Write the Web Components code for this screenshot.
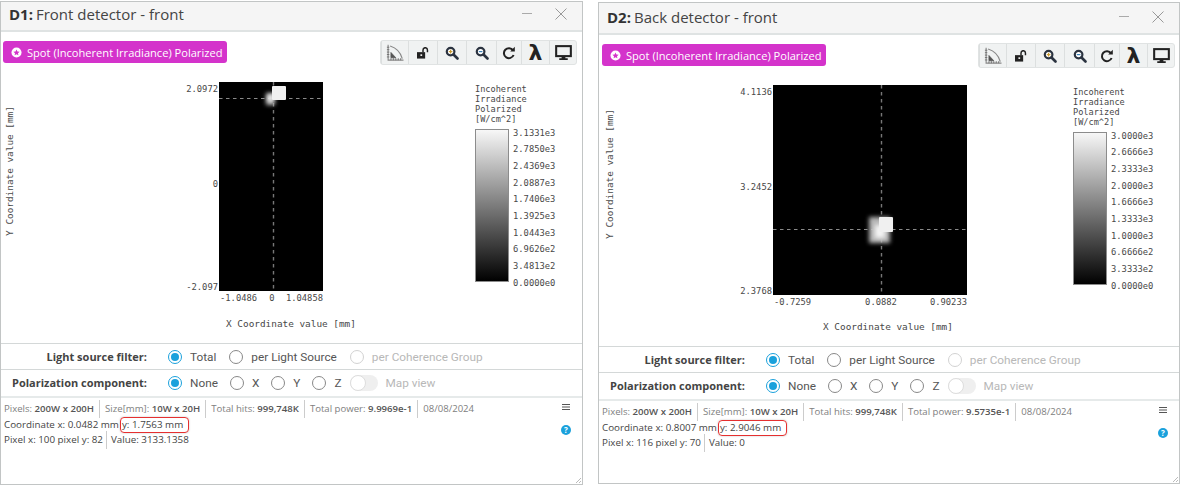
<!DOCTYPE html>
<html>
<head>
<meta charset="utf-8">
<title>Detectors</title>
<style>
  html, body { margin: 0; height: 100%; background: #fff; overflow: hidden; }
  body { position: relative; font-family: "Open Sans", "Noto Sans", sans-serif; }
</style>
</head>
<body>

<detector-window style="left:0;top:1px;width:583px;height:484px;--head:30px;--head-pad:4px;--tag-pad:2px;--tool-pad:5px" label="D1:" name="Front detector - front">
  <spot-plot ix="218" iy="82" iw="104" ih="209"
    ymax="2.0972" ymid="0" ymin="-2.097" xmin="-1.0486" xmid="0" xmax="1.04858"
    cx="54" cy="16" spot="53,4,14,14" glow="47,11,9,12;49,13,5,6" ylabel-x="12" xlabel-x="290" xmid-shift="-1"
    ticks="3.1331e3,2.7850e3,2.4369e3,2.0887e3,1.7406e3,1.3925e3,1.0443e3,6.9626e2,3.4813e2,0.0000e0"></spot-plot>
  <filter-rows slot="rows"></filter-rows>
  <status-panel slot="status" pixel="200W x 200H" size="10W x 20H" hits="999,748K" power="9.9969e-1" date="08/08/2024"
    cx="0.0482 mm" cy="1.7563 mm" px="Pixel x: 100 pixel y: 82" value="3133.1358"></status-panel>
</detector-window>

<detector-window style="left:598px;top:2px;width:582px;height:482px;--head:32px;--head-pad:3px;--tag-pad:3px;--tool-pad:4px" label="D2:" name="Back detector - front">
  <spot-plot ix="174" iy="82" iw="194" ih="210"
    ymax="4.1136" ymid="3.2452" ymin="2.3768" xmin="-0.7259" xmid="0.0882" xmax="0.90233"
    cx="108" cy="144" spot="106,132,14,15" glow="96,132,21,26;102,140,10,13" ylabel-x="14" xlabel-x="289" xmid-shift="0"
    ticks="3.0000e3,2.6666e3,2.3333e3,2.0000e3,1.6666e3,1.3333e3,1.0000e3,6.6666e2,3.3333e2,0.0000e0"></spot-plot>
  <filter-rows slot="rows"></filter-rows>
  <status-panel slot="status" pixel="200W x 200H" size="10W x 20H" hits="999,748K" power="9.5735e-1" date="08/08/2024"
    cx="0.8007 mm" cy="2.9046 mm" px="Pixel x: 116 pixel y: 70" value="0"></status-panel>
</detector-window>

<script>
class DetectorWindow extends HTMLElement {
  constructor() {
    super();
    this.shadow = this.attachShadow({ mode: 'open' });
  }
  connectedCallback() {
    this.shadow.innerHTML = `
      <style>
        :host { position: absolute; display: flex; flex-direction: column; box-sizing: border-box;
          background: #fff; border: 1px solid #c2c5c5; color: #333; }
        .head { height: var(--head); box-sizing: border-box; flex: none; display: flex; align-items: center;
          padding: 0 15px var(--head-pad) 8px; background: #f5f5f5; border-bottom: 2px solid #dfe3e3; font-size: 15px; color: #444; }
        .head b { font-weight: 700; margin-right: 3px; color: #333; }
        .head .ctl { margin-left: auto; display: flex; gap: 23px; align-items: center; }
        .bar { flex: none; height: 34px; box-sizing: border-box; display: flex; align-items: center;
          justify-content: space-between; padding: 6px var(--tool-pad) 0 var(--tag-pad); }
        .plot { flex: none; height: 277px; }
        .grip { position: absolute; right: 0; bottom: 0; }
      </style>
      <div class="head">
        <b>${this.getAttribute('label')}</b><span>${this.getAttribute('name')}</span>
        <div class="ctl">
          <svg width="10" height="12" viewBox="0 0 10 12"><path d="M0 5.5h10" stroke="#aaa" stroke-width="1"/></svg>
          <svg width="12" height="12" viewBox="0 0 12 12"><path d="M.5 .5l11 11M11.5 .5L.5 11.5" stroke="#999" stroke-width="1" fill="none"/></svg>
        </div>
      </div>
      <div class="bar">
        <result-tag>Spot (Incoherent Irradiance) Polarized</result-tag>
        <plot-toolbar></plot-toolbar>
      </div>
      <div class="plot"><slot></slot></div>
      <slot name="rows"></slot>
      <slot name="status"></slot>
      <svg class="grip" width="9" height="9" viewBox="0 0 9 9"><path d="M8 3L3 8M8 6L6 8" stroke="#bbb"/></svg>`;
  }
}
customElements.define('detector-window', DetectorWindow);

class ResultTag extends HTMLElement {
  constructor() {
    super();
    this.attachShadow({ mode: 'open' }).innerHTML = `
      <style>
        :host { display: inline-flex; align-items: center; gap: 5px; height: 22px; box-sizing: border-box;
          padding: 0 5px 0 8px; background: #d433cb; border-radius: 3px; color: #fff; font-size: 11.1px; white-space: nowrap; }
        svg { flex: none; }
      </style>
      <svg width="11" height="11" viewBox="0 0 12 12"><circle cx="6" cy="6" r="5.5" fill="#fff"/>
        <path d="M6 2.6l1 2.2 2.4.3-1.8 1.6.5 2.4L6 8 3.9 9.1l.5-2.4-1.8-1.6 2.4-.3z" fill="#d433cb"/></svg>
      <slot></slot>`;
  }
}
customElements.define('result-tag', ResultTag);

class PlotToolbar extends HTMLElement {
  constructor() {
    super();
    const lens = (mark) => `<svg width="14" height="14" viewBox="0 0 14 14">
        <circle cx="5.6" cy="5.6" r="3.8" fill="#fff" stroke="#2b3340" stroke-width="2.2"/>
        <path d="M8.5 8.5l4 4" stroke="#2b3340" stroke-width="2.6" stroke-linecap="round"/>${mark}</svg>`;
    const icons = [
      [27, `<svg width="18" height="17" viewBox="0 0 22 21" fill="none" stroke="#888">
        <path d="M2.5 1v19h19" stroke-width="1.4"/>
        <path d="M5 2.5C13 5 18 11 20 18" stroke-width="1.4"/>
        <path d="M6 17V10.5l6 6.5z" fill="#555" stroke="#555"/>
        <path d="M1 4h3M1 7h3M1 10h3M1 13h3M1 16h3M6 20v-2.5M9 20v-2.5M12 20v-2.5M15 20v-2.5M18 20v-2.5" stroke="#666"/></svg>`],
      [29, `<svg width="14" height="12" viewBox="0 0 16 14">
        <rect x="1" y="6" width="9.5" height="7.5" fill="#222"/><rect x="5" y="8.5" width="2" height="2" fill="#eee"/>
        <path d="M8 6V3.4a2.6 2.6 0 0 1 5.2 0V6" fill="none" stroke="#222" stroke-width="1.7"/></svg>`],
      [29, lens('<path d="M3.8 5.6h3.6M5.6 3.8v3.6" stroke="#c99a30" stroke-width="1.2"/>')],
      [30, lens('<path d="M3.8 5.6h3.6" stroke="#3a7fb5" stroke-width="1.2"/>')],
      [25, `<svg width="14" height="14" viewBox="0 0 14 14"><path d="M11 4.2A5 5 0 1 0 11.6 9" fill="none" stroke="#222" stroke-width="2"/>
        <path d="M8.2 5.4h4.6V0.8z" fill="#222"/></svg>`],
      [28, `<span class="lam">λ</span>`],
      [27, `<svg width="17" height="16" viewBox="0 0 18 17"><rect x="1.2" y="1.2" width="15.6" height="10.6" fill="none" stroke="#222" stroke-width="2.2"/>
        <path d="M7 12h4v2h2.5v2h-9v-2H7z" fill="#222"/></svg>`]
    ];
    this.attachShadow({ mode: 'open' }).innerHTML = `
      <style>
        :host { display: inline-flex; height: 25px; box-sizing: border-box; background: #f0f2f2;
          border: 1px solid #e0e3e3; border-radius: 3px; margin-top: 1px; }
        div { display: flex; align-items: center; justify-content: center; box-sizing: border-box; border-left: 1px solid #dcdfdf; }
        div:first-child { border-left: 0; }
        .lam { font: 700 22px "DejaVu Sans", sans-serif; color: #222; line-height: 20px; }
      </style>
      ${icons.map(([w, s]) => `<div style="width:${w}px">${s}</div>`).join('')}`;
  }
}
customElements.define('plot-toolbar', PlotToolbar);

class SpotPlot extends HTMLElement {
  constructor() {
    super();
    this.shadow = this.attachShadow({ mode: 'open' });
  }
  connectedCallback() {
    const a = (n) => this.getAttribute(n);
    const n = (k) => Number(a(k));
    const ix = n('ix'), iy = n('iy') - 66, iw = n('iw'), ih = n('ih');
    const cx = ix + n('cx'), cy = iy + n('cy');
    const [sx, sy, sw, sh] = a('spot').split(',').map(Number);
    const glows = a('glow').split(';').map((g) => g.split(',').map(Number));
    const uid = a('ymax').replace('.', '');
    const lx = 474, ly = 63;
    const ticks = a('ticks').split(',');
    const step = 150 / (ticks.length - 1);
    this.shadow.innerHTML = `
      <style>
        :host { display: block; height: 100%; }
        svg { display: block; }
        text { font-family: "DejaVu Sans Mono", monospace; fill: #484848; }
      </style>
      <svg width="581" height="277">
        <defs>
          <filter id="b${uid}" x="-100%" y="-100%" width="300%" height="300%"><feGaussianBlur stdDeviation="2.2"/></filter>
          <linearGradient id="g${uid}" x1="0" y1="0" x2="0" y2="1">
            <stop offset="0" stop-color="#f8f8f8"/><stop offset="1" stop-color="#000"/>
          </linearGradient>
          <clipPath id="c${uid}"><rect x="${ix}" y="${iy}" width="${iw}" height="${ih}"/></clipPath>
        </defs>
        <rect x="${ix}" y="${iy}" width="${iw}" height="${ih}" fill="#000"/>
        <g clip-path="url(#c${uid})">
          <path d="M${ix} ${cy + 0.5}H${ix + iw}" stroke="#8a8a8a" stroke-dasharray="3.5 3.5" fill="none"/>
          <path d="M${cx + 0.5} ${iy}V${iy + ih}" stroke="#777" stroke-width="1.4" stroke-dasharray="3.5 3.5" fill="none"/>
          ${glows.map(([gx, gy, gw, gh], i) => `<rect x="${ix + gx}" y="${iy + gy}" width="${gw}" height="${gh}" fill="${i ? '#f4f4f4' : '#b8b8b8'}" filter="url(#b${uid})"/>`).join('')}
          <rect x="${ix + sx}" y="${iy + sy}" width="${sw}" height="${sh}" fill="#f0f0f0" rx="1"/>
        </g>
        <g font-size="8.8" text-anchor="end">
          <text x="${ix - 1}" y="${iy + 10}">${a('ymax')}</text>
          <text x="${ix - 1}" y="${iy + ih / 2}">${a('ymid')}</text>
          <text x="${ix - 1}" y="${iy + ih - 1}">${a('ymin')}</text>
        </g>
        <g font-size="8.8">
          <text x="${ix + 1}" y="${iy + ih + 9.5}">${a('xmin')}</text>
          <text text-anchor="middle" x="${cx + n('xmid-shift')}" y="${iy + ih + 9.5}">${a('xmid')}</text>
          <text text-anchor="end" x="${ix + iw}" y="${iy + ih + 9.5}">${a('xmax')}</text>
        </g>
        <text font-size="9.4" text-anchor="middle" x="${a('xlabel-x')}" y="261">X Coordinate value [mm]</text>
        <text font-size="9.4" text-anchor="middle" transform="translate(${n('ylabel-x')} 105) rotate(-90)">Y Coordinate value [mm]</text>
        <g font-size="8.6">
          <text x="${lx}" y="${ly - 37}">Incoherent</text>
          <text x="${lx}" y="${ly - 27}">Irradiance</text>
          <text x="${lx}" y="${ly - 17}">Polarized</text>
          <text x="${lx}" y="${ly - 7}">[W/cm^2]</text>
        </g>
        <rect x="${lx + 0.5}" y="${ly + 0.5}" width="33" height="152" fill="url(#g${uid})" stroke="#8c8c8c"/>
        <g font-size="8.8">
          ${ticks.map((t, i) => `<text x="${lx + 38}" y="${ly + 6.7 + i * step}">${t}</text>`).join('')}
        </g>
      </svg>`;
  }
}
customElements.define('spot-plot', SpotPlot);

class RadioOption extends HTMLElement {
  constructor() {
    super();
    this.shadow = this.attachShadow({ mode: 'open' });
  }
  connectedCallback() {
    const on = this.hasAttribute('checked');
    const off = this.hasAttribute('disabled');
    this.shadow.innerHTML = `
      <style>
        :host { display: inline-flex; align-items: center; gap: 8px; font: 11.8px Roboto, "Open Sans", sans-serif;
          color: ${off ? '#b8b8b8' : '#555'}; }
        i { width: 14px; height: 14px; box-sizing: border-box; border-radius: 50%; background: #fff; display: block;
          border: 1px solid ${on ? '#1aa1dc' : off ? '#d2d2d2' : '#888'}; position: relative; }
        i::after { content: ""; position: absolute; inset: 2px; border-radius: 50%; background: ${on ? '#1aa1dc' : 'transparent'}; }
      </style>
      <i></i><slot></slot>`;
  }
}
customElements.define('radio-option', RadioOption);

class FilterRows extends HTMLElement {
  constructor() {
    super();
    this.attachShadow({ mode: 'open' }).innerHTML = `
      <style>
        :host { display: block; flex: none; }
        .row { display: flex; align-items: center; height: 26px; box-sizing: border-box; border-top: 1px solid #d4d8d8; }
        .row + .row { height: 29px; border-bottom: 2px solid #e6eaea; padding-bottom: 1px; }
        label { font-size: 11px; font-weight: 700; color: #444; text-align: right; flex: none; width: 146px; }
        .opts { display: flex; align-items: center; gap: 13px; margin-left: 21px; }
        .row + .row .opts { gap: 12px; }
        .switch { display: flex; align-items: center; gap: 8px; margin-left: -4px; font: 11.8px Roboto, "Open Sans", sans-serif;
          color: #b8b8b8; }
        .toggle { width: 28px; height: 16px; border-radius: 8px; background: #efefef; position: relative; }
        .toggle::after { content: ""; position: absolute; left: 0; top: 0; width: 16px; height: 16px; border-radius: 50%;
          background: #fff; border: 1px solid #ddd; box-sizing: border-box; }
      </style>
      <div class="row">
        <label>Light source filter:</label>
        <div class="opts">
          <radio-option checked>Total</radio-option>
          <radio-option>per Light Source</radio-option>
          <radio-option disabled>per Coherence Group</radio-option>
        </div>
      </div>
      <div class="row">
        <label>Polarization component:</label>
        <div class="opts">
          <radio-option checked>None</radio-option>
          <radio-option>X</radio-option>
          <radio-option>Y</radio-option>
          <radio-option>Z</radio-option>
          <div class="switch"><div class="toggle"></div><span>Map view</span></div>
        </div>
      </div>`;
  }
}
customElements.define('filter-rows', FilterRows);

class StatusPanel extends HTMLElement {
  constructor() {
    super();
    this.shadow = this.attachShadow({ mode: 'open' });
  }
  connectedCallback() {
    const a = (n) => this.getAttribute(n);
    this.shadow.innerHTML = `
      <style>
        :host { display: block; position: relative; padding: 3px 3px 0; font-size: 9.6px; color: #444; }
        .line { display: flex; align-items: center; height: 15px; white-space: nowrap; }
        .line.big { font-size: 9.8px; }
        .cell { color: #808080; padding: 0 5px 0 0; margin-right: 5px; border-right: 1px solid #ccc; line-height: 18px; }
        .cell:last-child { border: 0; }
        .cell b { font-weight: 600; color: #555; }
        .plain { color: #444; }
        .hl { box-sizing: border-box; border: 1.5px solid #e53030; border-radius: 4px; padding: 0 5px 0 1px; height: 16px;
          line-height: 13px; margin-left: 1px; box-shadow: 0 0 2px rgba(0,0,0,.25); }
        .menu { position: absolute; right: 12px; top: 6px; }
        .help { position: absolute; right: 11px; top: 27px; width: 10px; height: 10px; border-radius: 50%;
          background: #1aa1dc; color: #fff; font: 700 8px/10px "Open Sans", sans-serif; text-align: center; }
      </style>
      <div class="line">
        <span class="cell">Pixels: <b>${a('pixel')}</b></span>
        <span class="cell">Size[mm]: <b>${a('size')}</b></span>
        <span class="cell">Total hits: <b>${a('hits')}</b></span>
        <span class="cell">Total power: <b>${a('power')}</b></span>
        <span class="cell">${a('date')}</span>
      </div>
      <div class="line big" style="margin-top:1px"><span class="plain">Coordinate x: ${a('cx')}</span><span class="plain hl">y: ${a('cy')}</span></div>
      <div class="line big"><span class="cell plain" style="color:#444;padding-right:3px;margin-right:4px">${a('px')}</span><span class="plain">Value: ${a('value')}</span></div>
      <svg class="menu" width="8" height="6" viewBox="0 0 8 6"><path d="M0 .5h8M0 3h8M0 5.5h8" stroke="#555" stroke-width="1"/></svg>
      <div class="help">?</div>`;
  }
}
customElements.define('status-panel', StatusPanel);
</script>
</body>
</html>
